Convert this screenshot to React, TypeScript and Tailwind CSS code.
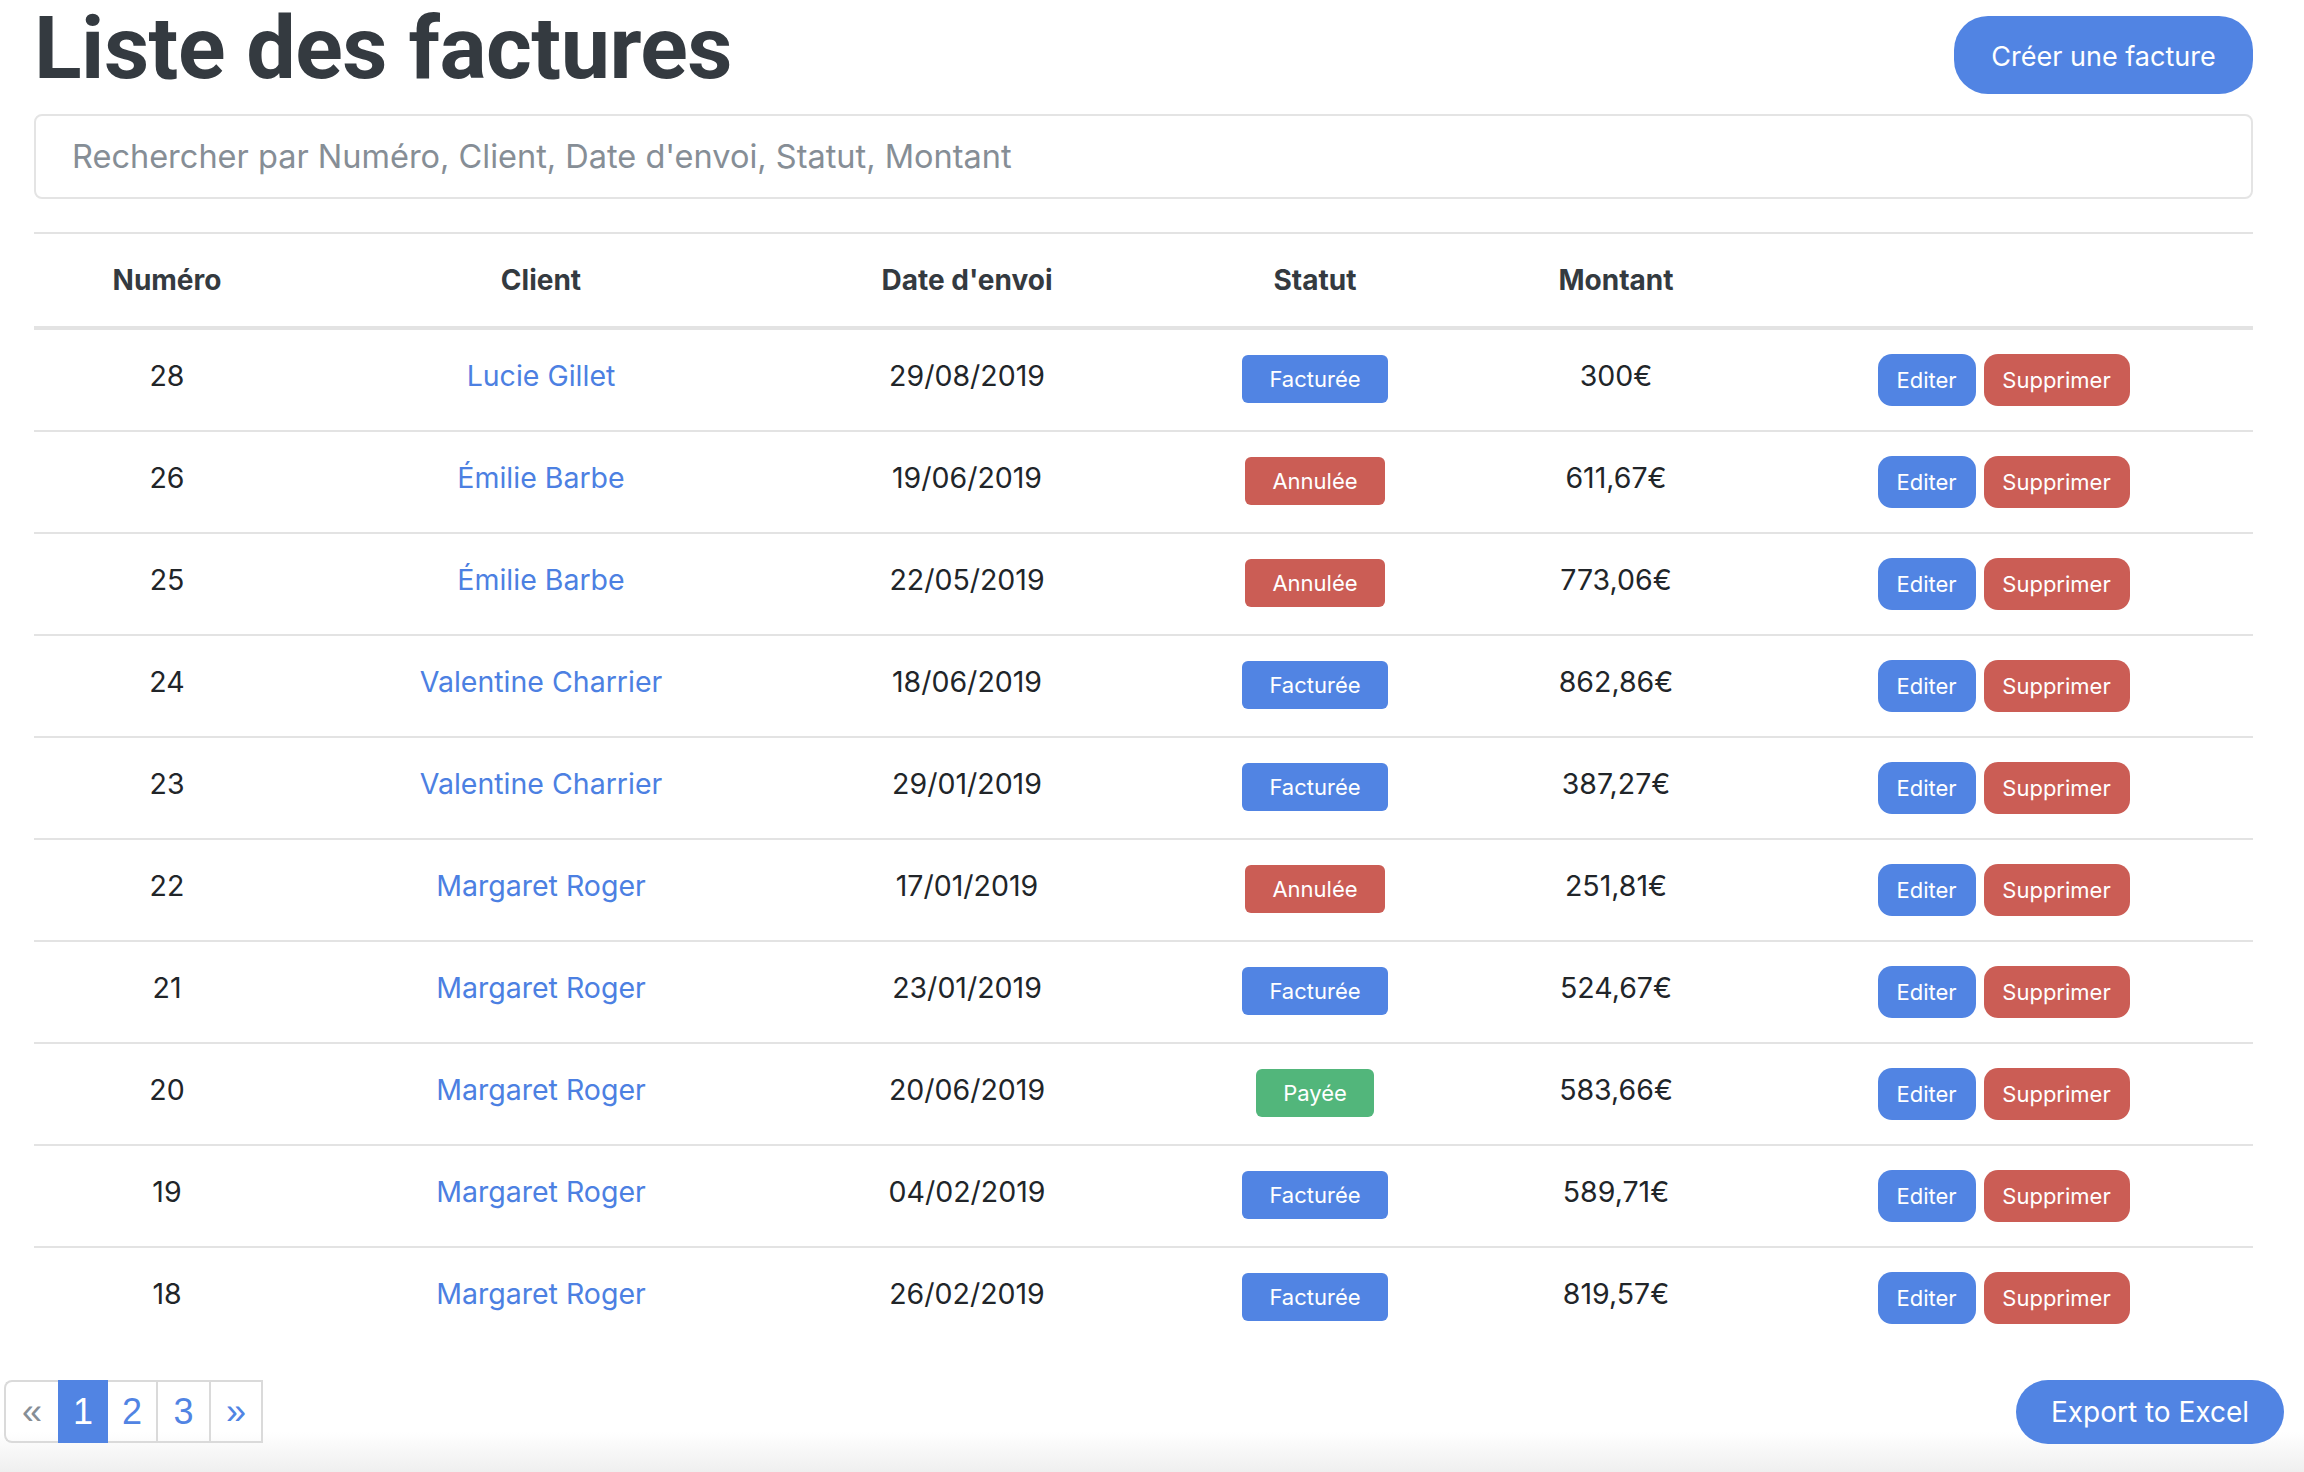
import React from "react";

type Status = "Facturée" | "Annulée" | "Payée";
const rows: { n: number; client: string; date: string; status: Status; amount: string }[] = [
  { n: 28, client: "Lucie Gillet", date: "29/08/2019", status: "Facturée", amount: "300€" },
  { n: 26, client: "Émilie Barbe", date: "19/06/2019", status: "Annulée", amount: "611,67€" },
  { n: 25, client: "Émilie Barbe", date: "22/05/2019", status: "Annulée", amount: "773,06€" },
  { n: 24, client: "Valentine Charrier", date: "18/06/2019", status: "Facturée", amount: "862,86€" },
  { n: 23, client: "Valentine Charrier", date: "29/01/2019", status: "Facturée", amount: "387,27€" },
  { n: 22, client: "Margaret Roger", date: "17/01/2019", status: "Annulée", amount: "251,81€" },
  { n: 21, client: "Margaret Roger", date: "23/01/2019", status: "Facturée", amount: "524,67€" },
  { n: 20, client: "Margaret Roger", date: "20/06/2019", status: "Payée", amount: "583,66€" },
  { n: 19, client: "Margaret Roger", date: "04/02/2019", status: "Facturée", amount: "589,71€" },
  { n: 18, client: "Margaret Roger", date: "26/02/2019", status: "Facturée", amount: "819,57€" },
];

function Badge({ s }: { s: Status }) {
  const cls =
    s === "Facturée" ? "bg-[#5184e3]" : s === "Annulée" ? "bg-[#cb5d55]" : "bg-[#52b67b]";
  return (
    <span className={`${cls} inline-flex h-[48px] items-center rounded-[6px] px-[27px] text-[22px] text-white`}>
      {s}
    </span>
  );
}

const grid = "grid grid-cols-[266px_482px_370px_326px_276px_1fr] items-center text-center";

export default function App() {
  return (
    <div className="flex min-h-screen w-full flex-col bg-white font-['Inter',sans-serif] text-[#212529]">
      <div className="pl-[34px] pr-[51px]">
        <div className="flex h-[114px] items-start justify-between">
          <h1 className="mt-[4px] font-['Roboto',sans-serif] text-[88px] font-bold leading-[88px] tracking-[-0.5px] text-[#343a40]">
            Liste des factures
          </h1>
          <button className="mt-[16px] flex h-[78px] w-[299px] items-center justify-center rounded-[34px] bg-[#5184e3] pt-[5px] text-[27px] text-white">
            Créer une facture
          </button>
        </div>
        <input
          className="block h-[85px] w-full rounded-[8px] border-2 border-[#e4e4e4] pl-[36px] text-[32.5px] outline-none placeholder:text-[#868e96]"
          placeholder="Rechercher par Numéro, Client, Date d'envoi, Statut, Montant"
        />
        <div className="mt-[33px] border-t-2 border-[#e3e3e3]">
          <div className={`${grid} h-[96px] border-b-4 border-[#e3e3e3] text-[28px] font-bold text-[#343a40]`}>
            <div>Numéro</div>
            <div>Client</div>
            <div>Date d'envoi</div>
            <div>Statut</div>
            <div>Montant</div>
            <div></div>
          </div>
          {rows.map((r, i) => (
            <div
              key={r.n}
              className={`${grid} ${i === 0 ? "h-[100px]" : "h-[102px] border-t-2 border-[#e3e3e3]"} text-[28.5px]`}
            >
              <div className="pb-[8px]">{r.n}</div>
              <div className="pb-[8px] text-[#4c80e2]">{r.client}</div>
              <div className="pb-[8px]">{r.date}</div>
              <div className="flex justify-center pb-[2px]">
                <Badge s={r.status} />
              </div>
              <div className="pb-[8px]">{r.amount}</div>
              <div className="flex justify-center gap-[8px]">
                <button className="flex h-[52px] w-[98px] items-center justify-center rounded-[14px] bg-[#5184e3] text-[22px] text-white">
                  Editer
                </button>
                <button className="flex h-[52px] w-[146px] items-center justify-center rounded-[14px] bg-[#cb5d55] text-[22px] text-white">
                  Supprimer
                </button>
              </div>
            </div>
          ))}
        </div>
      </div>
      <div className="flex h-[124px] items-start justify-between bg-[linear-gradient(to_bottom,#ffffff_0px,#ffffff_84px,#efefef_124px)] pl-[4px] pr-[20px] pt-[32px]">
        <div className="flex h-[63px] font-['Liberation_Sans',sans-serif] text-[36px]">
          <div className="flex w-[54px] items-center justify-center rounded-l-[8px] border-2 border-r-0 border-[#dadada] text-[#868e96]">
            «
          </div>
          <div className="flex w-[50px] items-center justify-center bg-[#5184e3] text-white">1</div>
          <div className="flex w-[50px] items-center justify-center border-y-2 border-r-2 border-[#dadada] text-[#5184e3]">2</div>
          <div className="flex w-[53px] items-center justify-center border-y-2 border-r-2 border-[#dadada] text-[#5184e3]">3</div>
          <div className="flex w-[52px] items-center justify-center border-y-2 border-r-2 border-[#dadada] text-[#5184e3]">»</div>
        </div>
        <button className="flex h-[64px] w-[268px] items-center justify-center rounded-full bg-[#5184e3] text-[28px] text-white">
          Export to Excel
        </button>
      </div>
    </div>
  );
}
